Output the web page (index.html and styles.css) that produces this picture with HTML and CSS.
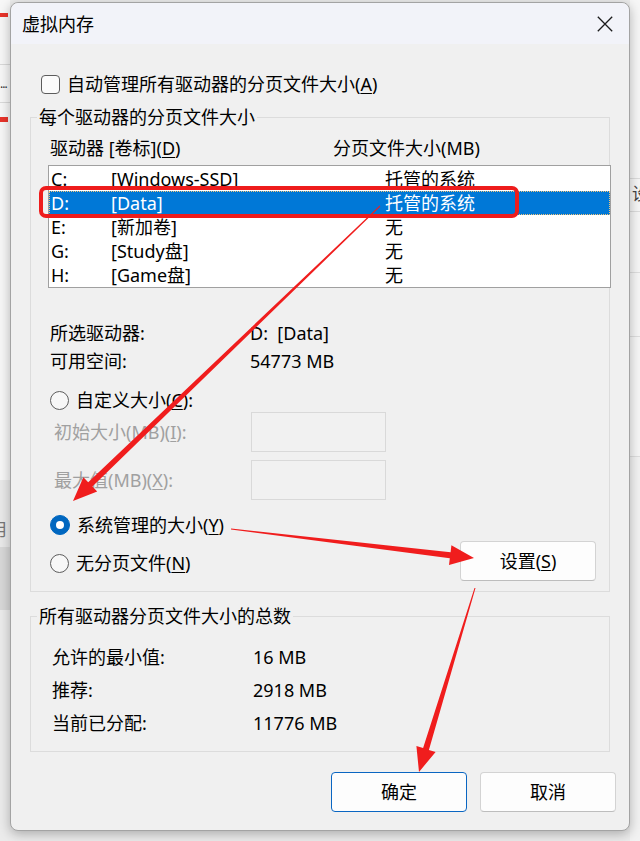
FILE: index.html
```html
<!DOCTYPE html>
<html lang="zh-CN">
<head>
<meta charset="utf-8">
<title>虚拟内存</title>
<link rel="stylesheet" href="styles.css">
</head>
<body>
<div class="screen">
  <div class="bg-left">
    <div class="bl-red bl-red1"></div>
    <div class="bl-dots">...</div>
    <div class="bl-red bl-red2"></div>
    <div class="bl-band"><span class="bl-char">月</span></div>
  </div>

  <div class="dialog">
    <div class="titlebar">
      <span class="title">虚拟内存</span>
      <svg class="close" width="16" height="16" viewBox="0 0 16 16" aria-label="关闭">
        <path d="M0.8 0.8 L15.2 15.2 M15.2 0.8 L0.8 15.2" stroke="#1b1b1b" stroke-width="1.3" fill="none"/>
      </svg>
    </div>

    <div class="content">
      <div class="check-row">
        <span class="checkbox"></span>
        <span>自动管理所有驱动器的分页文件大小(<u>A</u>)</span>
      </div>

      <fieldset class="group group-drives">
        <legend>每个驱动器的分页文件大小</legend>
        <div class="list-head">
          <span>驱动器 [卷标](<u>D</u>)</span>
          <span>分页文件大小(MB)</span>
        </div>
        <div class="listbox">
          <div class="lrow"><span>C:</span><span>[Windows-SSD]</span><span>托管的系统</span></div>
          <div class="lrow selected"><span>D:</span><span>[Data]</span><span>托管的系统</span></div>
          <div class="lrow"><span>E:</span><span>[新加卷]</span><span>无</span></div>
          <div class="lrow"><span>G:</span><span>[Study盘]</span><span>无</span></div>
          <div class="lrow"><span>H:</span><span>[Game盘]</span><span>无</span></div>
        </div>

        <div class="info">
          <span>所选驱动器:</span><span>D:&nbsp; [Data]</span>
          <span>可用空间:</span><span>54773 MB</span>
        </div>

        <div class="radio-row r-custom"><span class="radio"></span><span>自定义大小(<u>C</u>):</span></div>
        <div class="size-row size-first"><span class="dis">初始大小(MB)(<u>I</u>):</span><span class="textbox"></span></div>
        <div class="size-row size-second"><span class="dis">最大值(MB)(<u>X</u>):</span><span class="textbox"></span></div>
        <div class="radio-row r-system"><span class="radio checked"></span><span>系统管理的大小(<u>Y</u>)</span></div>
        <div class="none-row">
          <div class="radio-row r-none"><span class="radio"></span><span>无分页文件(<u>N</u>)</span></div>
          <button class="btn btn-set">设置(<u>S</u>)</button>
        </div>
      </fieldset>

      <fieldset class="group group-total">
        <legend>所有驱动器分页文件大小的总数</legend>
        <div class="totals">
          <span>允许的最小值:</span><span>16 MB</span>
          <span>推荐:</span><span>2918 MB</span>
          <span>当前已分配:</span><span>11776 MB</span>
        </div>
      </fieldset>

      <div class="actions">
        <button class="btn primary">确定</button>
        <button class="btn">取消</button>
      </div>
    </div>
  </div>

  <div class="bg-right">
    <span class="br-char">设</span>
  </div>

  <svg class="annotations" width="640" height="841" viewBox="0 0 640 841">
    <rect x="41" y="188" width="476" height="28" rx="5" ry="5" fill="none" stroke="#ee1c1c" stroke-width="4"/>
    <polygon fill="#f01d1d" points="380.3,206.4 92.4,486.6 97.2,491.6 73,501 83.4,477.2 88.2,482.2 379.7,205.6"/>
    <polygon fill="#f01d1d" points="230.9,529.5 449.8,558.2 449,565.1 474,558 451.4,545.3 450.6,552.2 231.1,528.5"/>
    <polygon fill="#f01d1d" points="474.5,587.9 423.1,748.1 416.4,746.1 419,772 435.6,751.9 428.9,749.9 475.5,588.1"/>
  </svg>
</div>
</body>
</html>
```

FILE: styles.css
```css
html, body {
  margin: 0;
  padding: 0;
}

body {
  background: #ececec;
  font-family: "Noto Sans", "Noto Sans CJK SC", sans-serif;
  font-size: 18px;
  color: #000;
}

.screen {
  position: relative;
  width: 640px;
  height: 841px;
  overflow: hidden;
  display: flex;
  background: #ececec;
}

/* ---------- window behind (edges) ---------- */
.bg-left {
  width: 10px;
  flex: none;
  display: flex;
  flex-direction: column;
  background:
    linear-gradient(#f7f7f7 0 64px, #d9d9d9 64px 65px, #f7f7f7 65px 102px, #dadada 102px 103px, #f7f7f7 103px 480px, #e9e9e9 480px 547px, #d8d8d8 547px 610px, #ebebeb 610px);
  overflow: hidden;
}

.bl-red {
  width: 8px;
  height: 4px;
  background: #e8332a;
}

.bl-red1 { margin-top: 13px; }

.bl-dots {
  margin-top: 62px;
  height: 14px;
  line-height: 10px;
  font-size: 12px;
  color: #333;
  letter-spacing: -1px;
}

.bl-red2 { margin-top: 24px; height: 5px; }

.bl-band {
  margin-top: 390px;
  height: 40px;
  overflow: hidden;
  position: relative;
}

.bl-char {
  display: block;
  margin-left: -9px;
  line-height: 36px;
  color: #777;
  font-size: 17px;
}

.bg-right {
  flex: 1;
  overflow: hidden;
  background:
    linear-gradient(#f6f6f6 0 178px, #dcdcdc 178px 179px, #f6f6f6 179px 211px, #dcdcdc 211px 212px, #f6f6f6 212px 272px, #dedede 272px 273px, #f6f6f6 273px 336px, #dedede 336px 337px, #f6f6f6 337px 456px, #dedede 456px 457px, #f2f2f2 457px);
}

.br-char {
  display: block;
  margin-top: 182px;
  margin-left: 2px;
  line-height: 24px;
  font-size: 17px;
  color: #444;
  white-space: nowrap;
}

/* ---------- dialog ---------- */
.dialog {
  position: relative;
  z-index: 1;
  flex: none;
  width: 620px;
  height: 829px;
  margin-top: 2px;
  box-sizing: border-box;
  border: 1px solid #a3a3a3;
  border-radius: 8px;
  background: #f0f0f0;
  box-shadow: 0 3px 12px rgba(0, 0, 0, 0.28);
  display: flex;
  flex-direction: column;
  overflow: hidden;
}

.titlebar {
  height: 41px;
  flex: none;
  background: #f2f3f9;
  display: flex;
  align-items: center;
  justify-content: space-between;
  border-radius: 7px 7px 0 0;
}

.title {
  padding-left: 11px;
  line-height: 20px;
}

.close {
  margin-right: 16px;
  display: block;
}

.content {
  padding: 0 19px;
}

u {
  text-decoration-thickness: 1px;
  text-underline-offset: 2px;
}

/* checkbox */
.check-row {
  margin-top: 30px;
  margin-left: 11px;
  height: 20px;
  line-height: 20px;
  display: flex;
  align-items: center;
  gap: 7px;
}

.checkbox {
  width: 19px;
  height: 19px;
  box-sizing: border-box;
  border: 1px solid #5c5c5c;
  border-radius: 4px;
  background: #fbfbfb;
  flex: none;
}

/* group boxes */
.group {
  margin: 0;
  padding: 0;
  min-width: 0;
  border: 1px solid #dcdcdc;
}

.group legend {
  margin-left: 6px;
  padding: 0 2px;
  line-height: 20px;
  height: 20px;
}

.group-drives {
  margin-top: 13px;
  padding-bottom: 10px;
}

.group-total {
  margin-top: 14px;
  padding-bottom: 11px;
}

.list-head {
  margin-top: 11px;
  padding-left: 19px;
  height: 20px;
  line-height: 20px;
  display: grid;
  grid-template-columns: 283px 1fr;
  white-space: nowrap;
}

.listbox {
  margin-top: 7px;
  margin-left: 17px;
  margin-right: -2px;
  height: 123px;
  box-sizing: border-box;
  border: 1px solid #a0a0a0;
  padding-top: 1px;
  background: #fff;
}

.lrow {
  height: 24px;
  line-height: 24px;
  padding-left: 2px;
  display: grid;
  grid-template-columns: 60px 274px 1fr;
  white-space: nowrap;
}

.lrow.selected {
  background: #0078d7;
  color: #fff;
  outline: 1px dotted #f3c57a;
  outline-offset: -1px;
}

.info {
  margin-top: 31px;
  padding-left: 19px;
  display: grid;
  grid-template-columns: 200px 1fr;
  grid-auto-rows: 28px;
  line-height: 28px;
  white-space: nowrap;
}

/* radios */
.radio-row {
  padding-left: 19px;
  height: 20px;
  line-height: 20px;
  display: flex;
  align-items: center;
  gap: 7px;
  white-space: nowrap;
}

.radio {
  width: 19px;
  height: 19px;
  box-sizing: border-box;
  border: 1px solid #5d5d5d;
  border-radius: 50%;
  background: #f7f7f7;
  flex: none;
}

.radio.checked {
  width: 20px;
  height: 20px;
  background: #0067c0;
  border-color: #0067c0;
  display: grid;
  place-items: center;
}

.radio.checked::after {
  content: "";
  width: 8px;
  height: 8px;
  border-radius: 50%;
  background: #fff;
}

.r-custom { margin-top: 15px; }
.r-system { margin-top: 15px; }

.size-row {
  padding-left: 23px;
  height: 40px;
  display: grid;
  grid-template-columns: 197px 135px;
  align-items: center;
  line-height: 20px;
  white-space: nowrap;
}

.size-first { margin-top: 2px; }
.size-second { margin-top: 8px; }

.dis {
  color: #a0a0a0;
}

.textbox {
  height: 40px;
  box-sizing: border-box;
  border: 1px solid #d9d9d9;
  background: #f1f1f1;
}

.none-row {
  margin-top: 6px;
  height: 40px;
  padding-right: 13px;
  display: flex;
  justify-content: space-between;
  align-items: flex-start;
}

.r-none {
  margin-top: 12px;
}

/* buttons */
.btn {
  width: 136px;
  height: 40px;
  box-sizing: border-box;
  padding: 0;
  background: #fdfdfd;
  border: 1px solid #d3d3d3;
  border-bottom-color: #bdbdbd;
  border-radius: 4px;
  font: inherit;
  color: #000;
  line-height: 38px;
}

.btn.primary {
  border-color: #0a66c2;
}

.totals {
  margin-top: 15px;
  padding-left: 21px;
  display: grid;
  grid-template-columns: 201px 1fr;
  grid-auto-rows: 33px;
  line-height: 33px;
  white-space: nowrap;
}

.actions {
  margin-top: 20px;
  margin-right: -6px;
  display: flex;
  justify-content: flex-end;
  gap: 13px;
}

/* annotation overlay */
.annotations {
  position: absolute;
  left: 0;
  top: 0;
  z-index: 2;
  pointer-events: none;
}
```
